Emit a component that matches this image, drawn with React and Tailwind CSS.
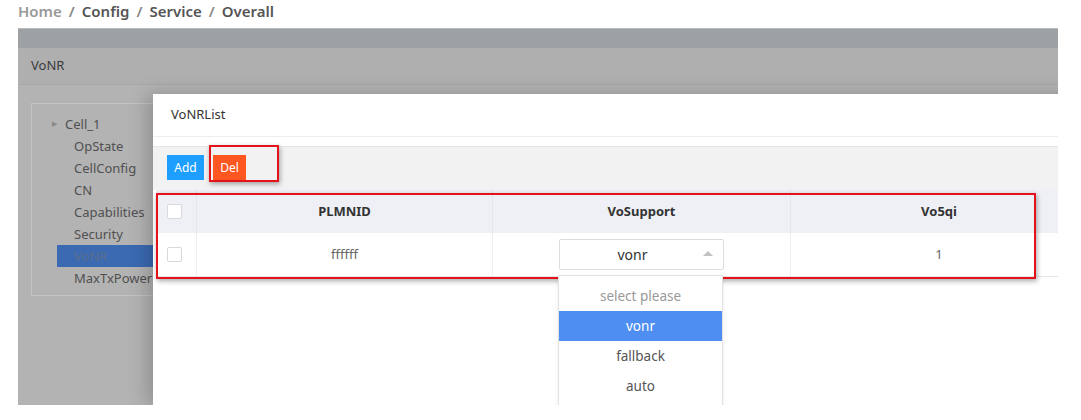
import React from "react";

const treeItems = ["OpState", "CellConfig", "CN", "Capabilities", "Security", "VoNR", "MaxTxPower"];

const options = [
  { label: "select please", muted: true },
  { label: "vonr", active: true },
  { label: "fallback" },
  { label: "auto" },
];

const Checkbox = () => (
  <div className="h-[15px] w-[15px] rounded-[2px] border border-[#d9d9d9] bg-white" />
);

const App = () => {
  return (
    <div
      className="relative h-[420px] w-[1081px] overflow-hidden bg-white"
      style={{ fontFamily: '"Noto Sans", "Open Sans", sans-serif' }}
    >
      {/* BREADCRUMB */}
      <div className="flex h-[28px] items-start gap-[7px] pl-[18px] text-[15px] font-semibold leading-[23px]">
        <span className="text-[#999]">Home</span>
        <span className="text-[#888]">/</span>
        <span className="text-[#555]">Config</span>
        <span className="text-[#888]">/</span>
        <span className="text-[#555]">Service</span>
        <span className="text-[#888]">/</span>
        <span className="text-[#555]">Overall</span>
      </div>

      {/* DIMMED PAGE */}
      <div className="relative ml-[18px] h-[377px] w-[1040px] overflow-hidden bg-[#b3b3b3]">
        <div className="h-[20px] border-t border-[#bababa] bg-[#9ea1a4]" />
        <div className="flex h-[37px] items-center border-b border-[#a8a8a8] bg-[#afafaf] pl-[13px] text-[13px] text-[#3a3a3a]">
          VoNR
        </div>

        {/* TREE */}
        <div className="ml-[13px] mt-[18px] h-[193px] w-[220px] border border-[#c4c4c4] pb-[5px] pt-[9px] text-[13px] leading-[22px] text-[#505050]">
          <div className="flex items-center pl-[20px]">
            <span className="mr-[8px] text-[7px] text-[#8a8a8a]">▶</span>
            <span>Cell_1</span>
          </div>
          {treeItems.map((item) =>
            item === "VoNR" ? (
              <div key={item} className="ml-[25px] h-[22px] bg-[#3b6ab3] pl-[17px] text-[#5a6d8e]">
                {item}
              </div>
            ) : (
              <div key={item} className="pl-[42px]">
                {item}
              </div>
            )
          )}
        </div>

        {/* MODAL */}
        <div className="absolute left-[135px] top-[66px] bottom-0 w-[960px] bg-white shadow-[-6px_0_18px_rgba(0,0,0,0.2)]">
          <div className="flex h-[43px] items-center border-b border-[#eeeeee] pl-[18px] text-[13px] text-[#333]">
            VoNRList
          </div>
          <div className="h-[9px]" />
          <div className="flex h-[44px] items-start gap-[9px] border-t border-[#e6e6e6] bg-[#f2f2f2] pl-[14px] pt-[8px]">
            <div className="flex h-[25px] w-[37px] items-center justify-center bg-[#1e9fff] text-[12px] text-white">
              Add
            </div>
            <div className="flex h-[25px] w-[33px] items-center justify-center bg-[#ff5722] text-[12px] text-white">
              Del
            </div>
          </div>

          {/* TABLE */}
          <div className="ml-[3px] w-[931px] text-[13px]">
            <div className="flex h-[43px] items-center bg-[#eef0f6] font-bold text-[#333]">
              <div className="flex h-full w-[40px] items-center pl-[11px]">
                <Checkbox />
              </div>
              <div className="flex h-full w-[296px] items-center justify-center border-l border-[#e4e6ec]">
                PLMNID
              </div>
              <div className="flex h-full w-[298px] items-center justify-center border-l border-[#e4e6ec]">
                VoSupport
              </div>
              <div className="flex h-full w-[297px] items-center justify-center border-l border-[#e4e6ec]">
                Vo5qi
              </div>
            </div>
            <div className="flex h-[44px] items-center border-b border-[#e6e6e6] text-[#666]">
              <div className="flex h-full w-[40px] items-center pl-[11px]">
                <Checkbox />
              </div>
              <div className="flex h-full w-[296px] items-center justify-center border-l border-[#eeeeee]">
                ffffff
              </div>
              <div className="relative flex h-full w-[298px] items-center justify-center border-l border-[#eeeeee]">
                <div className="relative flex h-[31px] w-[165px] items-center justify-center rounded-[2px] border border-[#dddddd] bg-white pr-[18px] text-[14px] text-[#333]">
                  vonr
                  <span className="absolute right-[10px] top-[11px] h-0 w-0 border-x-[5px] border-b-[5px] border-x-transparent border-b-[#c2c2c2]" />
                </div>
                {/* DROPDOWN */}
                <div className="absolute left-[65px] top-[42px] z-10 w-[165px] border border-[#e2e2e2] bg-white pt-[5px] text-[13.5px] shadow-[0_2px_4px_rgba(0,0,0,0.08)]">
                  {options.map((opt) => (
                    <div
                      key={opt.label}
                      className={`flex h-[30px] items-center justify-center ${
                        opt.active
                          ? "bg-[#4e8ef2] text-white"
                          : opt.muted
                          ? "text-[#999]"
                          : "text-[#555]"
                      }`}
                    >
                      {opt.label}
                    </div>
                  ))}
                  <div className="h-[30px]" />
                </div>
              </div>
              <div className="flex h-full w-[297px] items-center justify-center border-l border-[#eeeeee]">
                1
              </div>
            </div>
          </div>

          {/* ANNOTATION BOXES */}
          <div className="absolute left-[56px] top-[51px] h-[37px] w-[70px] border-2 border-[#e3121b] shadow-[1px_2px_5px_rgba(0,0,0,0.35)]" />
          <div className="absolute left-[3px] top-[99px] h-[86px] w-[880px] border-2 border-[#e3121b] shadow-[1px_2px_5px_rgba(0,0,0,0.35)]" />
        </div>
      </div>
    </div>
  );
};

export default App;
